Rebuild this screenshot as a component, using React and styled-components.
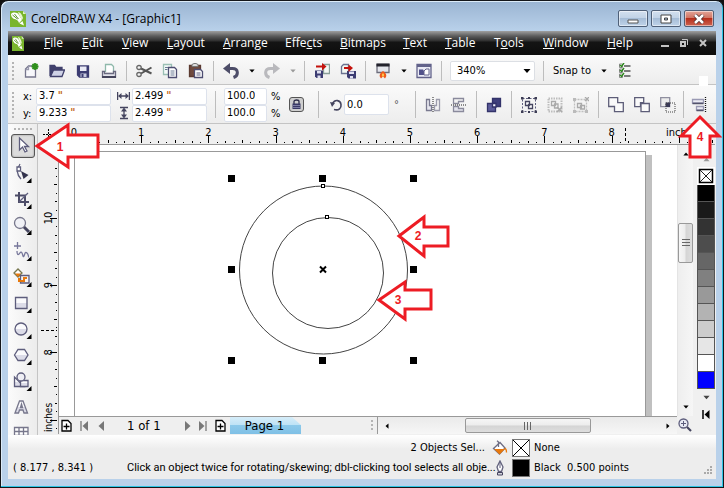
import React from 'react'
import styled, { createGlobalStyle, css } from 'styled-components'

const uiFont = '"DejaVu Sans Condensed", "DejaVu Sans", sans-serif'
const menuFont = '"Open Sans", "Noto Sans", sans-serif'
const narrowFont = 'Roboto, "Noto Sans", sans-serif'

const INCH = 67.2

const GlobalStyle = createGlobalStyle`
  * { box-sizing: border-box; }
  body { margin: 0; background: #111; }
  button, input, select { font: inherit; color: inherit; margin: 0; }
  svg { display: block; }
`

const Window = styled.div`
  position: relative;
  display: flex;
  flex-direction: column;
  height: 100vh;
  min-height: 320px;
  padding: 0 7px 8px;
  overflow: hidden;
  border: 1px solid #14161a;
  border-radius: 8px 8px 0 0;
  background: linear-gradient(#9ab4d2, #b9d1ea 30px);
  box-shadow: inset -1px -1px 0 #2cc4e4, inset 1px 1px 0 #dcebf8;
  font: 11px/14px ${uiFont};
  color: #000;
`

const TitleBar = styled.header`
  display: flex;
  align-items: center;
  height: 30px;
  flex: none;
  padding: 5px 0 0 2px;
  gap: 5px;
`

const Title = styled.h1`
  flex: 1;
  margin: 0;
  font: 12px/18px ${menuFont};
`

const WindowButtons = styled.div`
  display: flex;
  gap: 3px;
  align-self: flex-start;
  padding: 4px 2px 0 0;
`

const WindowButton = styled.button`
  display: grid;
  place-items: center;
  width: 30px;
  height: 17px;
  padding: 0;
  border: 1px solid #4f6078;
  border-radius: 2px;
  box-shadow: inset 0 0 0 1px rgba(255, 255, 255, 0.5);
  background: ${p =>
    p.$close
      ? 'linear-gradient(#e3a598, #cf7261 48%, #b62f1c 50%, #cd6350)'
      : 'linear-gradient(#d3e0ef, #c0d2e6 48%, #a6bdd7 50%, #bfd3e9)'};
`

const MenuBar = styled.nav`
  display: flex;
  align-items: center;
  flex: none;
  height: 24px;
  padding: 0 9px 0 4px;
  background: linear-gradient(#a0a0a0, #5c5c5c 5px, #2e2e2e 10px, #141414 11px, #0c0c0c);
  color: #fff;
  font: 12px/18px ${menuFont};
`

const MenuLinks = styled.div`
  display: flex;
  flex: 1;
  padding-left: 10px;
`

const MenuButton = styled.button`
  width: ${p => p.$width}px;
  padding: 0 0 0 10px;
  border: 0;
  background: none;
  text-align: left;
  white-space: nowrap;
`

const DocButtons = styled.div`
  display: flex;
  gap: 11px;
`

const PlainButton = styled.button`
  display: grid;
  place-items: center;
  padding: 0;
  border: 0;
  background: none;
`

const bar = css`
  display: flex;
  align-items: center;
  flex: none;
  padding-left: 4px;
  background: linear-gradient(#fafafa, #ededed);
`

const Toolbar = styled.div`
  ${bar}
  height: 30px;
  padding-top: 2px;
  border-bottom: 1px solid #c4c4c4;
`

const PropertyBar = styled.div`
  ${bar}
  height: 39px;
  padding-top: 1px;
  border-bottom: 1px solid #c4c4c4;
`

const Grip = styled.span`
  flex: none;
  width: ${p => (p.$horizontal ? 18 : 2)}px;
  height: ${p => (p.$horizontal ? 2 : p.$size || 18)}px;
  margin: ${p => (p.$horizontal ? '0' : '0 4px 0 0')};
  background: ${p =>
    p.$horizontal
      ? 'repeating-linear-gradient(90deg, #b4b4b4 0 2px, transparent 2px 4px)'
      : 'repeating-linear-gradient(#b4b4b4 0 2px, transparent 2px 4px)'};
`

const Separator = styled.span`
  flex: none;
  width: 1px;
  height: ${p => (p.$tall ? 27 : 20)}px;
  margin: 0 ${p => (p.$gap === undefined ? 4 : p.$gap)}px;
  background: #bdbdbd;
`

const IconButton = styled(PlainButton)`
  flex: none;
  width: ${p => p.$width || 26}px;
  height: 24px;
`

const LockBox = styled.span`
  display: grid;
  place-items: center;
  width: 15px;
  height: 15px;
  border: 1px solid #555;
  border-radius: 3px;
  background: #cfcfcf;
`

const ZoomSelect = styled.select`
  appearance: none;
  width: 85px;
  height: 20px;
  margin-left: 4px;
  padding: 0 6px;
  border: 1px solid #dcdfe4;
  border-radius: 2px;
  background: #fff;
`

const SelectWrap = styled.span`
  display: grid;
  align-items: center;
  > * { grid-area: 1 / 1; }
  > svg { justify-self: end; margin-right: 4px; pointer-events: none; }
`

const SnapButton = styled(PlainButton)`
  padding-left: 1px;
`

const Fields = styled.div`
  display: grid;
  grid-template-columns: ${p => p.$columns};
  grid-auto-rows: 17px;
  align-items: center;
`

const Label = styled.label`
  padding-left: ${p => p.$indent || 0}px;
  line-height: 17px;
`

const FieldBox = styled.span`
  display: flex;
  align-items: center;
  width: ${p => p.$width}px;
  height: ${p => (p.$tall ? 21 : 17)}px;
  padding-left: 2px;
  border: 1px solid #dde2ec;
  border-radius: 2px;
  background: #fff;
`

const Value = styled.input`
  field-sizing: content;
  min-width: 0;
  max-width: 40px;
  height: 14px;
  padding: 0;
  border: 0;
  background: none;
  outline: none;
`

const Unit = styled.span`
  padding-left: 3px;
  color: #c46a1c;
  font-weight: bold;
`

const Degree = styled.span`
  width: 22px;
  padding-left: 5px;
  color: #555;
`

const Workspace = styled.main`
  display: flex;
  flex: 1;
  min-height: 0;
  background: #f0f0f0;
`

const Toolbox = styled.div`
  display: flex;
  flex-direction: column;
  align-items: center;
  flex: none;
  width: 30px;
  padding-top: 4px;
  overflow: hidden;
  border-right: 1px solid #c4c4c4;
  background: linear-gradient(90deg, #fbfbfb, #ececec);
`

const ToolButton = styled(PlainButton)`
  flex: none;
  width: 24px;
  height: 24px;
  margin-top: 2px;
  ${p =>
    p.$active &&
    css`
      margin: 4px 0 2px;
      border: 1px solid #555;
      border-radius: 3px;
      background: #dcdcdc;
      box-shadow: inset 0 0 2px #888;
    `}
`

const Desk = styled.div`
  display: grid;
  grid-template-columns: 21px minmax(0, 1fr) 16px;
  grid-template-rows: 21px minmax(0, 1fr) 18px;
  flex: 1;
  min-width: 0;
  margin-bottom: 1px;
`

// runs on above the palette, up to the window edge
const RulerTop = styled.div`
  grid-column: 1 / 4;
  min-width: 0;
  margin-right: -22px;
  overflow: hidden;
  border-bottom: 1px solid #999;
  background: #efefef;
`

const RulerLeft = styled.div`
  grid-row: 2 / 4;
  overflow: hidden;
  border-right: 1px solid #999;
  background: #efefef;
`

const Canvas = styled.div`
  display: flex;
  overflow: hidden;
  padding: 6px 31px 0 15px;
  background: #fff;
`

const Page = styled.div`
  flex: 1;
  min-width: 0;
  border: 1px solid #999;
  border-bottom: 0;
  background: #fff;
  box-shadow: 6px 4px 0 #c0c0c0;
`

const ScrollColumn = styled.div`
  display: flex;
  flex-direction: column;
  align-items: center;
  padding: 6px 0;
  border-left: 1px solid #e4e4e4;
  background: linear-gradient(90deg, #eee, #f6f6f6);
`

const Thumb = styled.span`
  display: grid;
  place-items: center;
  flex: none;
  width: ${p => (p.$vertical ? 15 : 126)}px;
  height: ${p => (p.$vertical ? 40 : 15)}px;
  border: 1px solid #999;
  border-radius: 2px;
  background: ${p =>
    p.$vertical
      ? 'linear-gradient(90deg, #f6f6f6, #ececec 48%, #d4d4d4 52%, #dedede)'
      : 'linear-gradient(#f6f6f6, #ececec 48%, #d4d4d4 52%, #dedede)'};
`

const Space = styled.span`
  flex: ${p => p.$grow};
`

const PageBar = styled.div`
  display: flex;
  min-width: 0;
  border-top: 1px solid #999;
`

const PageNav = styled.div`
  display: flex;
  align-items: center;
  flex: none;
  width: 319px;
  padding-left: 2px;
  border-right: 1px solid #999;
  background: #efefef;
`

const NavButton = styled(PlainButton)`
  width: ${p => p.$width}px;
  height: 17px;
  justify-items: start;
`

const PageCount = styled.span`
  width: 57px;
  font-size: 13px;
`

const PageTab = styled.button`
  width: 71px;
  height: 17px;
  margin-right: auto;
  padding: 0 2px 0 0;
  border: 0;
  background: linear-gradient(#d6edf9, #bfe3f6 45%, #8cc9ea 50%, #7fc0e6);
  clip-path: polygon(0 0, 62px 0, 100% 8px, 100% 100%, 0 100%);
  font-size: 13px;
  line-height: 16px;
`

const ScrollRow = styled.div`
  display: flex;
  align-items: center;
  flex: 1;
  min-width: 0;
  padding: 0 6px;
  background: linear-gradient(#eaeaea, #f6f6f6);
`

const Palette = styled.div`
  display: flex;
  flex-direction: column;
  align-items: center;
  flex: none;
  width: 23px;
  padding: 32px 1px 0 4px;
`

const NoColor = styled(PlainButton)`
  width: 18px;
  height: 18px;
  margin-top: 4px;
  background: #fff;
`

const Swatch = styled.button`
  flex: none;
  width: 18px;
  height: 17px;
  padding: 0;
  border: 1px solid #555;
  border-top: 0;
  background: ${p => p.$color};
`

const PaletteArrow = styled(PlainButton)`
  height: 17px;
  flex: none;
`

const StatusBar = styled.footer`
  display: grid;
  grid-template-columns: 114px minmax(0, 1fr) 20px 22px auto;
  grid-auto-rows: 20px;
  align-items: center;
  flex: none;
  height: 44px;
  padding: 3px 3px 0 5px;
  background: linear-gradient(#fff, #ededed 14px);
`

const Selection = styled.span`
  grid-column: 1 / 3;
  padding-right: 7px;
  text-align: right;
`

const Hint = styled.span`
  white-space: nowrap;
  font: 11px/14px ${narrowFont};
`

const Paint = styled.span`
  width: 18px;
  height: 18px;
  border: 1px solid #777;
  background: ${p => p.$color};
`

const Corner = styled.span`
  display: flex;
  align-items: flex-end;
  justify-content: space-between;
  width: 179px;
`

// pale spot where the toolbar fades out above callout 4
const Spot = styled.span`
  position: absolute;
  top: 75px;
  right: 15px;
  width: 9px;
  height: 10px;
  background: #fff;
`

const CalloutLayer = styled.svg`
  position: absolute;
  top: ${p => p.$top}px;
  ${p => (p.$right === undefined ? `left: ${p.$left}px;` : `right: ${p.$right}px;`)}
  pointer-events: none;
  fill: #fff;
  stroke: #ed1c24;
  stroke-width: 3;
  text {
    font: bold 12px "Liberation Sans", sans-serif;
    fill: #ed1c24;
    stroke: none;
  }
`

const Icon = ({ size = 16, w, h, children }) => (
  <svg
    width={w || size}
    height={h || size}
    viewBox={`0 0 ${w || size} ${h || size}`}
    fill='none'
    stroke='#5d5d7c'
    strokeWidth='1.3'
    aria-hidden='true'
  >
    {children}
  </svg>
)

const Caret = ({ dir = 'down', color = '#000', size = 8 }) => {
  const turn = { down: 0, left: 90, up: 180, right: 270 }[dir]
  return (
    <svg width={size} height={size} viewBox='0 0 8 8' aria-hidden='true'>
      <path d='M0.5 2h7L4 6z' fill={color} transform={`rotate(${turn} 4 4)`} />
    </svg>
  )
}

const CorelMark = ({ width, height }) => (
  <svg width={width} height={height} viewBox='0 0 16 16' preserveAspectRatio='none' aria-hidden='true'>
    <path d='M0 0h13l3 3v13H0z' fill='#79b52c' />
    <path d='M1 3C3 1 7 1 9 4l3 5-3 3C8 9 6 8 4 8 2 7 1 5 1 3z' fill='#fff' />
    <path d='M8 1c2 0 4 2 5 6l-1 2C10 6 9 4 8 1z' fill='#e6f4d0' />
    <path d='M2.5 4l5 4M4.5 3l4 5' stroke='#4b8a16' strokeWidth='0.9' />
    <path d='M9.5 12.5L12.500 10l1.500 4.500z' fill='#fff' />
    <path d='M13 0v3h3z' fill='#dff0c4' />
  </svg>
)

const icons = {
  new: (
    <Icon>
      <path d='M2.5 14V6l3-3h7v11z' fill='#f7f7fb' stroke='#75758c' />
      <path d='M2.5 6.5h3V3' stroke='#9a9aae' />
      <path d='M12 0v7M8.5 3.5h7M9.5 1l5 5M14.5 1l-5 5' stroke='#2f8f1c' strokeWidth='1.8' />
    </Icon>
  ),
  open: (
    <Icon>
      <path d='M1 13V2.5h4.5l1.5 2h6V7' fill='#40406c' stroke='#40406c' />
      <path d='M1.5 13.5L4.5 7h11l-2.5 6.5z' fill='#cfd2e6' stroke='#40406c' />
    </Icon>
  ),
  save: (
    <Icon>
      <path d='M2.5 3h11v11h-9l-2-2z' fill='#3c3c72' stroke='#3c3c72' />
      <path d='M5 3.5h6.500V8H5z' fill='#e9eaf5' stroke='none' />
      <path d='M5.500 10.5h6V14h-6z' fill='#c9cbe0' stroke='none' />
      <path d='M6.5 11h2v3h-2z' fill='#3c3c72' stroke='none' />
    </Icon>
  ),
  print: (
    <Icon>
      <path d='M4.5 9V1.5h6l2 2V9' fill='#fff' stroke='#8fb9ab' />
      <path d='M1.5 8.5h2v2h9v-2h2V14h-13z' fill='#e4e4ec' stroke='#6a6a80' />
      <path d='M1 14h14' strokeWidth='2' stroke='#45455c' />
    </Icon>
  ),
  cut: (
    <Icon>
      <path d='M5 5.5l10.5 5M5 10.5l10.5-6' stroke='#555' strokeWidth='2' />
      <ellipse cx='3' cy='4.5' rx='2.2' ry='2' stroke='#666' />
      <ellipse cx='3' cy='11.5' rx='2.2' ry='2' stroke='#666' />
    </Icon>
  ),
  copy: (
    <Icon>
      <path d='M1.5 1.5h8v10h-8z' fill='#f4faf8' stroke='#9abfb4' />
      <path d='M6.5 4.5h6l2 2v8h-8z' fill='#fff' stroke='#4e4e72' />
      <path d='M3 4.5h3M3 6.5h2.5M8.5 8h4M8.5 10h4M8.5 12h4' strokeWidth='1' stroke='#6b7b94' />
    </Icon>
  ),
  paste: (
    <Icon>
      <path d='M1.5 2.5h11v11h-11z' fill='#6f4a3e' stroke='#5b3a30' />
      <path d='M4 3.5V1.5l2-1h2l2 1v2z' fill='#ddd' stroke='#777' strokeWidth='1' />
      <path d='M6.5 6.5h6l2 2v6h-8z' fill='#fff' stroke='#4e4e72' />
      <path d='M8.5 10h4M8.5 12h4' strokeWidth='1' />
    </Icon>
  ),
  undo: (
    <Icon>
      <path d='M5 5.5h4.5c6 0 6.5 7 1 9' stroke='#4d4d68' strokeWidth='3' />
      <path d='M0 5.5L7 0v11z' fill='#4d4d68' stroke='none' />
    </Icon>
  ),
  redo: (
    <Icon>
      <path d='M11 5.5H6.5c-6 0-6.5 7-1 9' stroke='#b9b9bd' strokeWidth='3' />
      <path d='M16 5.5L9 0v11z' fill='#b9b9bd' stroke='none' />
    </Icon>
  ),
  importFile: (
    <Icon>
      <path d='M9.5 1.5h6v9h-6z' fill='#f4f9f4' stroke='#8ba09a' />
      <path d='M1 7.5h8V15H2.5L1 13.5z' fill='#3c3c72' stroke='none' />
      <path d='M3 8h4v2.5H3zM3.5 12.5h3V15h-3z' fill='#dfe0f0' stroke='none' />
      <path d='M2 3.5h7' stroke='#c4120c' strokeWidth='2.2' />
      <path d='M8 0l4.5 3.5L8 7.5z' fill='#c4120c' stroke='none' />
    </Icon>
  ),
  exportFile: (
    <Icon>
      <path d='M1.5 10.5v-7l2-2h5v9z' fill='#f4f9f4' stroke='#6b7390' />
      <path d='M7 8h9v7.5H8.5L7 14z' fill='#3c3c72' stroke='none' />
      <path d='M9 8.5h5V11H9zM10 13h3v2.5h-3z' fill='#dfe0f0' stroke='none' />
      <path d='M4 5h6' stroke='#c4120c' strokeWidth='2.2' />
      <path d='M8.5 1.5L13 5 8.5 9z' fill='#c4120c' stroke='none' />
    </Icon>
  ),
  launcher: (
    <Icon>
      <path d='M2 1.5h12v8H2z' fill='#e4e6ec' stroke='#6d6d7c' />
      <path d='M1.5 2h13' stroke='#22222c' strokeWidth='3' />
      <path d='M8 8c4 3 4 5 2 7.5l-2-2-2 2C4 13 4 11 8 8z' fill='#ef5a1a' stroke='none' />
      <path d='M8 10c2 2 1 3 0 4-1-1-2-2 0-4z' fill='#ffc14a' stroke='none' />
    </Icon>
  ),
  welcome: (
    <Icon>
      <path d='M1 1.5h14v13H1z' fill='#e9eaf4' stroke='#62628a' />
      <path d='M1 2.5h14' stroke='#62628a' strokeWidth='3' />
      <path d='M3 6.500h4l1 1.500v4H3z' fill='#51518a' stroke='none' />
      <path d='M8 12V8l2-2h3v6z' fill='#fff' stroke='#62628a' strokeWidth='1' />
    </Icon>
  ),
  options: (
    <Icon>
      {[3, 8, 13].map(y => (
        <g key={y}>
          <path d={`M2.5 ${y - 2}h3v3.5h-3z`} fill='#fff' stroke='#888' strokeWidth='1' />
          <path d={`M3 ${y - 1}l1.500 1.5L7 ${y - 3}`} stroke='#2c8a1c' strokeWidth='1.4' />
          <path d={`M7 ${y}h6.5`} stroke='#555' />
        </g>
      ))}
    </Icon>
  ),
  width: (
    <Icon w={13} h={12}>
      <path d='M0.6 2v8M12.4 2v8M2 6h9' stroke='#45455f' />
      <path d='M1 6l3.5-3v6zM12 6L8.5 3v6z' fill='#45455f' stroke='none' />
    </Icon>
  ),
  height: (
    <Icon w={13} h={14}>
      <path d='M3 1.5h8M3 12.5h8M7 3v8' stroke='#45455f' />
      <path d='M7 1.5L4 5.5h6zM7 12.5L4 8.5h6z' fill='#45455f' stroke='none' />
    </Icon>
  ),
  lock: (
    <Icon size={11}>
      <path d='M3 5V2.5C3 .5 8 .5 8 2.5V5' stroke='#2c2c48' />
      <path d='M1.5 4.5h8V10h-8z' fill='#3a3a66' stroke='none' />
      <path d='M2 6.5h7M2 8.5h7' stroke='#8e8eb4' strokeWidth='0.8' />
    </Icon>
  ),
  rotate: (
    <Icon size={14}>
      <path d='M5 11.5c5 1.5 7.5-1.5 7-5C11.5 2 6 1 3.5 5.5' stroke='#45455f' strokeWidth='1.6' />
      <path d='M1 4l5 1-3 4z' fill='#45455f' stroke='none' />
    </Icon>
  ),
  mirrorH: (
    <Icon>
      <path d='M1.5 2.500h3v6h2v5h-5z' fill='#e8e8f0' stroke='#7a7a90' />
      <path d='M14.5 2.500h-3v6h-2v5h5z' fill='#f4f4f4' stroke='#9c9cac' />
      <path d='M8 0v16' stroke='#222' strokeWidth='1' strokeDasharray='1 1' />
    </Icon>
  ),
  mirrorV: (
    <Icon>
      <path d='M12.5 1.5v3h-5v2h-5v-5z' fill='#f4f4f4' stroke='#8a8a9c' />
      <path d='M12.5 14.5v-3h-5v-2h-5v5z' fill='#e4e4ee' stroke='#8a8a9c' />
      <path d='M0 8h16' stroke='#222' strokeWidth='1' strokeDasharray='1 1' />
    </Icon>
  ),
  order: (
    <Icon>
      <path d='M6.5 1.5h8v8h-8z' fill='#3f3f7c' stroke='#33336a' />
      <path d='M1.5 6.5h8v8h-8z' fill='#5c5c9a' stroke='#33336a' />
      <path d='M6.500 6.5h3.5V10H6.500z' fill='#f0f0fa' stroke='#33336a' />
    </Icon>
  ),
  group: (
    <Icon>
      <path d='M1.5 1.5h13v13h-13z' strokeDasharray='2 1.5' strokeWidth='1' />
      <path d='M4.5 4.5h4v4h-4zM7.5 7.5h4v4h-4z' fill='#fff' stroke='#45455f' />
      <path d='M0 0h2.500v2.500H0zM13.500 0H16v2.500h-2.500zM0 13.500h2.500V16H0zM13.500 13.500H16V16h-2.500zM7 0h2v2H7zM7 14h2v2H7z' fill='#3d3d55' stroke='none' />
    </Icon>
  ),
  ungroup: (
    <Icon>
      <path d='M1.5 1.5h13v13h-13z' stroke='#bdbdbd' strokeWidth='2' strokeDasharray='1.5 1' />
      <path d='M4.5 4.5h4v4h-4zM7.5 7H11v4H7.5z' fill='#f4f4f4' stroke='#aaa' />
      <path d='M10 10l5 5M15 10l-5 5' stroke='#aaa' strokeWidth='1.6' />
    </Icon>
  ),
  ungroupAll: (
    <Icon>
      <path d='M1.5 2.5h12v12h-12z' stroke='#c0c0c0' strokeDasharray='2 1' />
      <path d='M4.5 6.5h4v4h-4zM7.5 8.5h4V12h-4z' fill='#f4f4f4' stroke='#aaa' />
      <path d='M0 1h3v3H0zM0 13h3v3H0zM12 13h3v3h-3z' fill='#bbb' stroke='none' />
      <path d='M12 0l4 4M16 0l-4 4' stroke='#aaa' />
    </Icon>
  ),
  weld: (
    <Icon>
      <path d='M.7 .7h9v5h5.6v9H6.5V9.5H.7z' fill='#fafafa' stroke='#5d5d78' />
    </Icon>
  ),
  trim: (
    <Icon>
      <path d='M.7 .7h9v5H6.5v4H.7z' fill='#fafafa' stroke='#5d5d78' />
      <path d='M7 6.5h8.3v8.2H7z' fill='#fafafa' stroke='#5d5d78' />
    </Icon>
  ),
  intersect: (
    <Icon>
      <path d='M.7 .7h9v9h-9z' fill='#ededed' stroke='#9090a0' />
      <path d='M5.500 5.500H10V10H5.500z' fill='#3a3a58' stroke='none' />
      <path d='M6 6h9v9H6z' strokeDasharray='1 1' strokeWidth='1' stroke='#444' />
    </Icon>
  ),
  align: (
    <Icon>
      <path d='M1.5 2.5h11V6h-11zM5.5 9.5h7V13h-7z' fill='#ececf4' stroke='#9a9ab4' />
      <path d='M1.5 6.5h11M5.5 13.5h7' stroke='#53536c' />
      <path d='M14.5 0v16' strokeDasharray='1 1' stroke='#111' />
    </Icon>
  ),
  noColor: (
    <Icon>
      <path d='M1.5 1.5h13v13h-13z' fill='#fff' stroke='#000' strokeWidth='1.5' />
      <path d='M2 2l12 12M14 2L2 14' stroke='#222' strokeWidth='1' />
    </Icon>
  ),
  zoomPage: (
    <Icon w={14} h={14}>
      <circle cx='5.5' cy='5.5' r='4.5' fill='#e8eaf4' />
      <path d='M3 5.5h5M5.5 3v5' strokeWidth='1' />
      <path d='M9 9l4 4' strokeWidth='2.2' stroke='#45455f' />
    </Icon>
  ),
  bucket: (
    <Icon>
      <path d='M1.5 8.5L8 2.5l5 5.5-5.5 6z' fill='#fff' stroke='#6d6d84' />
      <path d='M2 9h11l-5.5 5.5z' fill='#e8780c' stroke='none' />
      <path d='M6.5 7V2L5 .7' stroke='#6d6d84' />
      <path d='M12.500 8.5c2 0 2 2 2 4' stroke='#e8780c' />
    </Icon>
  ),
  pen: (
    <Icon>
      <path d='M8 1l3 6-1.5 4.5h-3L5 7z' fill='#fff' stroke='#62627c' />
      <path d='M8 2v6' strokeWidth='1' />
      <path d='M5.5 12.5h5V15h-5z' fill='#d5d5de' stroke='#45455f' strokeWidth='1' />
    </Icon>
  ),
  newPage: (
    <Icon w={11} h={13}>
      <path d='M1 1.5h6l3 3V12H1z' fill='#fff' stroke='#000' />
      <path d='M5.5 4.5v6M2.5 7.5h6' stroke='#000' />
    </Icon>
  )
}

// flyout marks the tools that open a sub menu
const tools = [
  { name: 'Pick', flyout: false, art: <path d='M7.5 3v12l3-3 2.5 5 2-1-2.500-4.5h4z' fill='#fff' /> },
  {
    name: 'Shape',
    flyout: true,
    art: (
      <>
        <path d='M8 1c-4 6-3 11 1 15' />
        <path d='M5 4h3.500v4H5z' fill='#fff' />
        <path d='M9 8l7.500 4-5 4z' fill='#33334d' stroke='none' />
      </>
    )
  },
  {
    name: 'Crop',
    flyout: true,
    art: (
      <>
        <path d='M3 6.500h10v10.500M7 3v10h10' stroke='#4d4d68' strokeWidth='2' />
        <path d='M7 13L16 4' />
      </>
    )
  },
  {
    name: 'Zoom',
    flyout: true,
    art: (
      <>
        <circle cx='8' cy='8' r='5.5' fill='#f0f1f6' stroke='#77778c' />
        <path d='M12 12l5 5' stroke='#45455f' strokeWidth='3' />
      </>
    )
  },
  {
    name: 'Freehand',
    flyout: true,
    art: <path d='M2 5h7M5.5 1v7M5 10c0 4 1 4 2 3s2-3 3-1 1 5 2 3 1-5 3-3 1 4 2 4' stroke='#77779a' />
  },
  {
    name: 'Smart fill',
    flyout: true,
    art: (
      <>
        <path d='M2 6l4-4 4 4-4 4z' fill='#fff' stroke='#77774f' />
        <path d='M3 6.5h6L6 10z' fill='#e8780c' stroke='none' />
        <path d='M8.500 8.500H17V16H8.500z' fill='#f8f4f0' />
        <path d='M7 11v3h5v-3h3' stroke='#e8780c' strokeWidth='2' />
      </>
    )
  },
  { name: 'Rectangle', flyout: true, art: <path d='M3.5 4.5H15v11H3.5z' fill='url(#tool)' /> },
  { name: 'Ellipse', flyout: true, art: <circle cx='9' cy='10' r='6' fill='url(#tool)' /> },
  { name: 'Polygon', flyout: true, art: <path d='M2.5 10L6 4.5h6.5L16 10l-3.5 5.5H6z' fill='url(#tool)' /> },
  {
    name: 'Basic shapes',
    flyout: true,
    art: (
      <>
        <path d='M2.5 6v9.5H12z' fill='url(#tool)' />
        <path d='M8.5 9.5H16v6H8.5z' fill='url(#tool)' />
        <circle cx='9' cy='6' r='4' fill='#eeeef4' />
      </>
    )
  },
  {
    name: 'Text',
    flyout: false,
    art: <path d='M3 16L7.5 4H11l4.500 12H12l-1-3H7.5l-1 3zM8.5 10.5h2L9.5 7z' fill='url(#tool)' stroke='#77778c' />
  },
  {
    name: 'Table',
    flyout: false,
    art: <path d='M2.5 4.5H16v12H2.5zM7 4.5v12M11.5 4.5v12M2.5 8.5H16M2.5 12.5H16' fill='#fff' stroke='#77778c' />
  }
]

// label, shortcut position, width
const menus = [
  ['File', 0, 38],
  ['Edit', 0, 40],
  ['View', 0, 45],
  ['Layout', 0, 56],
  ['Arrange', 0, 62],
  ['Effects', 4, 55],
  ['Bitmaps', 0, 63],
  ['Text', 0, 42],
  ['Table', 0, 49],
  ['Tools', 1, 49],
  ['Window', 0, 64],
  ['Help', 0, 40]
]

const swatches = [
  '#000000',
  '#1a1a1a',
  '#333333',
  '#4d4d4d',
  '#666666',
  '#808080',
  '#999999',
  '#b3b3b3',
  '#cccccc',
  '#e6e6e6',
  '#ffffff',
  '#0000ff'
]

const tickLength = i => {
  if (i % 8 === 0) return 7
  if (i % 4 === 0) return 3
  if (i % 2 === 0) return 2
  return 1
}

const range = (from, to) => Array.from({ length: to - from }, (_, i) => from + i)

const Ruler = ({ vertical }) => {
  if (vertical) {
    // page height runs upwards, so numbers fall as y grows
    return (
      <svg width='20' height='100%' fontSize='11' fontFamily={uiFont} shapeRendering='crispEdges'>
        {range(-8, 56).map(i => {
          const y = Math.round(73 + (i * INCH) / 8)
          const len = tickLength(i)
          return <rect key={i} x={19 - len} y={y} width={len} height='1' />
        })}
        {range(0, 3).map(n => (
          <text key={n} transform={`translate(14 ${73 + n * INCH}) rotate(-90)`} textAnchor='middle'>
            {10 - n}
          </text>
        ))}
        <text transform='translate(14 287) rotate(-90)' fontSize='10'>
          inches
        </text>
        <path d='M3 185.5h16' stroke='#000' strokeDasharray='3 2' />
      </svg>
    )
  }
  return (
    <svg width='100%' height='20' fontSize='11' fontFamily={uiFont} shapeRendering='crispEdges'>
      <path d='M10.5 5v11M5 10.5h11' stroke='#000' strokeDasharray='2 1' />
      {range(-1, 96).map(i => {
        const x = Math.round(36 + (i * INCH) / 8)
        const len = tickLength(i)
        return <rect key={i} x={x} y={19 - len} width='1' height={len} />
      })}
      {range(0, 9).map(n => (
        <text key={n} x={36 + n * INCH} y='12' textAnchor='middle'>
          {n}
        </text>
      ))}
      <text x='628' y='12'>
        inches
      </text>
      <path d='M587.5 4v15' stroke='#000' strokeDasharray='3 2' />
    </svg>
  )
}

const Drawing = () => (
  <svg width='400' height='240' fill='none' stroke='#444' aria-label='Two circles'>
    <circle cx='248.5' cy='118' r='84' />
    <circle cx='253' cy='121' r='55.5' />
    <g fill='#000' stroke='none' shapeRendering='crispEdges'>
      {[153, 244, 335].map(x =>
        [23, 114, 205].map(y => (x === 244 && y === 114 ? null : <rect key={`${x}-${y}`} x={x} y={y} width='7' height='7' />))
      )}
    </g>
    <g fill='#fff' stroke='#000' shapeRendering='crispEdges'>
      <rect x='246.5' y='32.5' width='3' height='3' />
      <rect x='250.5' y='63.5' width='3' height='3' />
    </g>
    <path d='M245 114.5l6 6M251 114.5l-6 6' stroke='#000' strokeWidth='2' />
  </svg>
)

const Callout = ({ label, points, width, height, textX, textY, ...place }) => (
  <CalloutLayer width={width} height={height} {...place}>
    <polygon points={points} />
    <text x={textX} y={textY} textAnchor='middle'>
      {label}
    </text>
  </CalloutLayer>
)

const Field = ({ id, value, unit, width, tall, label }) => (
  <FieldBox $width={width} $tall={tall}>
    <Value id={id} defaultValue={value} aria-label={label} />
    {unit && <Unit>{unit}</Unit>}
  </FieldBox>
)

const Tool = ({ name, width, icon, ...rest }) => (
  <IconButton type='button' aria-label={name} $width={width} {...rest}>
    {icon || icons[name]}
  </IconButton>
)

const StandardBar = () => (
  <Toolbar>
    <Grip />
    {['new', 'open', 'save', 'print'].map(n => <Tool key={n} name={n} />)}
    <Separator />
    {['cut', 'copy', 'paste'].map(n => <Tool key={n} name={n} />)}
    <Separator />
    <Tool name='undo' />
    <Tool name='undo list' width={15} icon={<Caret size={6} />} />
    <Tool name='redo' />
    <Tool name='redo list' width={15} icon={<Caret size={6} color='#999' />} />
    <Separator />
    <Tool name='importFile' />
    <Tool name='exportFile' />
    <Separator />
    <Tool name='launcher' />
    <Tool name='launcher list' width={15} icon={<Caret size={6} />} />
    <Tool name='welcome' />
    <Separator />
    <SelectWrap>
      <ZoomSelect aria-label='Zoom level' defaultValue='340%'>
        <option>340%</option>
        <option>100%</option>
      </ZoomSelect>
      <Caret />
    </SelectWrap>
    <Separator $gap={8} />
    <SnapButton type='button'>Snap to</SnapButton>
    <Tool name='snap list' icon={<Caret size={6} />} />
    <Tool name='options' width={16} />
  </Toolbar>
)

const PropertyPanel = () => (
  <PropertyBar>
    <Grip $size={26} />
    <Fields $columns='18px 81px 15px 75px'>
      <Label htmlFor='pos-x' $indent={5}>x:</Label>
      <Field id='pos-x' value='3.7' unit='"' width={75} />
      {icons.width}
      <Field value='2.499' unit='"' width={75} label='Width' />
      <Label htmlFor='pos-y' $indent={5}>y:</Label>
      <Field id='pos-y' value='9.233' unit='"' width={75} />
      {icons.height}
      <Field value='2.499' unit='"' width={75} label='Height' />
    </Fields>
    <Separator $tall $gap={8} />
    <Fields $columns='47px 12px'>
      <Field id='scale-x' value='100.0' width={43} />
      <Label htmlFor='scale-x'>%</Label>
      <Field id='scale-y' value='100.0' width={43} />
      <Label htmlFor='scale-y'>%</Label>
    </Fields>
    <Tool name='lock ratio' icon={<LockBox>{icons.lock}</LockBox>} />
    <Separator $tall $gap={9} />
    <IconButton as='span' $width={16}>
      {icons.rotate}
    </IconButton>
    <Field value='0.0' width={45} tall label='Angle' />
    <Degree>°</Degree>
    <Separator $tall />
    <Tool name='mirrorH' />
    <Tool name='mirrorV' />
    <Separator $tall />
    <Tool name='order' />
    <Separator $tall />
    {['group', 'ungroup', 'ungroupAll'].map(n => <Tool key={n} name={n} />)}
    <Separator $tall />
    {['weld', 'trim', 'intersect'].map(n => <Tool key={n} name={n} />)}
    <Separator $tall $gap={2} />
    <Tool name='align' />
  </PropertyBar>
)

const ToolPanel = () => (
  <Toolbox>
    <Grip $horizontal />
    <svg width='0' height='0'>
      <linearGradient id='tool' x2='0' y2='1'>
        <stop offset='0.5' stopColor='#fafafc' />
        <stop offset='0.5' stopColor='#dcdce8' />
      </linearGradient>
    </svg>
    {tools.map((tool, i) => (
      <ToolButton key={tool.name} type='button' aria-label={tool.name} $active={i === 0}>
        <Icon size={22}>
          {tool.art}
          {tool.flyout && <path d='M19.5 15v5h-5z' fill='#000' stroke='none' />}
        </Icon>
      </ToolButton>
    ))}
  </Toolbox>
)

const Pages = () => (
  <PageBar>
    <PageNav>
      <NavButton type='button' $width={19} aria-label='Add page before'>
        {icons.newPage}
      </NavButton>
      <NavButton type='button' $width={18} aria-label='First page'>
        <Icon w={8} h={10}>
          <path d='M1 0v10' stroke='#777' />
          <path d='M8 0v10L2.5 5z' fill='#777' stroke='none' />
        </Icon>
      </NavButton>
      <NavButton type='button' $width={29} aria-label='Previous page'>
        <Icon w={8} h={10}>
          <path d='M6 0v10L.5 5z' fill='#777' stroke='none' />
        </Icon>
      </NavButton>
      <PageCount>1 of 1</PageCount>
      <NavButton type='button' $width={15} aria-label='Next page'>
        <Icon w={8} h={10}>
          <path d='M1 0v10L6.5 5z' fill='#777' stroke='none' />
        </Icon>
      </NavButton>
      <NavButton type='button' $width={16} aria-label='Last page'>
        <Icon w={8} h={10}>
          <path d='M7 0v10' stroke='#777' />
          <path d='M0 0v10L5.5 5z' fill='#777' stroke='none' />
        </Icon>
      </NavButton>
      <NavButton type='button' $width={15} aria-label='Add page after'>
        {icons.newPage}
      </NavButton>
      <PageTab type='button'>Page 1</PageTab>
      <Grip $size={12} />
    </PageNav>
    <ScrollRow>
      <Caret dir='left' size={6} />
      <Space $grow={75} />
      <Thumb>
        <Icon w={9} h={8}>
          <path d='M1.5 0v8M4.5 0v8M7.5 0v8' stroke='#666' strokeWidth='1' />
        </Icon>
      </Thumb>
      <Space $grow={75} />
      <Caret dir='right' size={6} />
    </ScrollRow>
  </PageBar>
)

const Colors = () => (
  <Palette>
    <Caret dir='up' color='#999' size={7} />
    <NoColor type='button' aria-label='No colour'>
      {icons.noColor}
    </NoColor>
    {swatches.map(color => (
      <Swatch key={color} type='button' $color={color} aria-label={color} />
    ))}
    <PaletteArrow type='button' aria-label='More colours'>
      <Caret color='#444' size={7} />
    </PaletteArrow>
    <PaletteArrow type='button' aria-label='Expand palette'>
      <Icon w={8} h={9}>
        <path d='M1 0v9' stroke='#000' strokeWidth='1.5' />
        <path d='M7.5 0v9L2.5 4.5z' fill='#000' stroke='none' />
      </Icon>
    </PaletteArrow>
  </Palette>
)

const Status = () => (
  <StatusBar>
    <Selection>2 Objects Sel...</Selection>
    {icons.bucket}
    <Paint $color='#fff'>
      <Icon>
        <path d='M0 0l16 16M16 0L0 16' stroke='#000' strokeWidth='1' />
      </Icon>
    </Paint>
    <span>None</span>
    <span>( 8.177 , 8.341 )</span>
    <Hint>Click an object twice for rotating/skewing; dbl-clicking tool selects all obje...</Hint>
    {icons.pen}
    <Paint $color='#000' />
    <Corner>
      <span>Black&nbsp; 0.500 points</span>
      <Icon w={9} h={9}>
        <path d='M6 1h2M3 4h2M6 4h2M0 7h2M3 7h2M6 7h2' stroke='#aaa' strokeWidth='2' />
      </Icon>
    </Corner>
  </StatusBar>
)

const App = () => (
  <>
    <GlobalStyle />
    <Window>
      <TitleBar>
        <CorelMark width={16} height={16} />
        <Title>CorelDRAW X4 - [Graphic1]</Title>
        <WindowButtons>
          <WindowButton type='button' aria-label='Minimize'>
            <Icon w={12} h={10}>
              <path d='M1 6h10v3H1z' fill='#fff' stroke='#555' strokeWidth='1' />
            </Icon>
          </WindowButton>
          <WindowButton type='button' aria-label='Maximize'>
            <Icon w={12} h={10}>
              <path d='M1 1h10v8H1zM4.5 4h3v2h-3z' fill='#fff' fillRule='evenodd' stroke='#444' strokeWidth='1' />
            </Icon>
          </WindowButton>
          <WindowButton type='button' $close aria-label='Close'>
            <Icon w={12} h={10}>
              <path d='M2 1l8 8M10 1L2 9' stroke='#4a2c2c' strokeWidth='4' />
              <path d='M2 1l8 8M10 1L2 9' stroke='#fff' strokeWidth='2.5' />
            </Icon>
          </WindowButton>
        </WindowButtons>
      </TitleBar>
      <MenuBar>
        <CorelMark width={12} height={15} />
        <MenuLinks>
          {menus.map(([label, key, width]) => (
            <MenuButton key={label} type='button' $width={width}>
              {label.slice(0, key)}
              <u>{label[key]}</u>
              {label.slice(key + 1)}
            </MenuButton>
          ))}
        </MenuLinks>
        <DocButtons>
          <PlainButton type='button' aria-label='Minimize document'>
            <Icon w={8} h={8}>
              <path d='M0 7h8' stroke='#c4c4c4' strokeWidth='2' />
            </Icon>
          </PlainButton>
          <PlainButton type='button' aria-label='Restore document'>
            <Icon w={8} h={8}>
              <path d='M1 3h4v4H1z' stroke='#c4c4c4' strokeWidth='2' />
              <path d='M2 .5h5.5V6' stroke='#c4c4c4' strokeWidth='1' />
            </Icon>
          </PlainButton>
          <PlainButton type='button' aria-label='Close document'>
            <Icon w={8} h={8}>
              <path d='M1 1l6 6M7 1L1 7' stroke='#c4c4c4' strokeWidth='2' />
            </Icon>
          </PlainButton>
        </DocButtons>
      </MenuBar>
      <StandardBar />
      <PropertyPanel />
      <Workspace>
        <ToolPanel />
        <Desk>
          <RulerTop>
            <Ruler />
          </RulerTop>
          <RulerLeft>
            <Ruler vertical />
          </RulerLeft>
          <Canvas>
            <Page>
              <Drawing />
            </Page>
          </Canvas>
          <ScrollColumn>
            <Caret dir='up' size={6} />
            <Space $grow={66} />
            <Thumb $vertical>
              <Icon w={8} h={9}>
                <path d='M0 1.5h8M0 4.5h8M0 7.5h8' stroke='#666' strokeWidth='1' />
              </Icon>
            </Thumb>
            <Space $grow={142} />
            <Caret size={6} />
          </ScrollColumn>
          <Pages />
          <PlainButton type='button' aria-label='Navigator'>
            {icons.zoomPage}
          </PlainButton>
        </Desk>
        <Colors />
      </Workspace>
      <Status />
      <Spot />
      <Callout
        label='1'
        width={68}
        height={50}
        $left={33}
        $top={121}
        points='3,24 34,3 34,13 64,13 64,35 34,35 34,45'
        textX={26}
        textY={29}
      />
      <Callout
        label='2'
        width={60}
        height={50}
        $left={393}
        $top={211}
        points='5,24 30,5 30,15 54,15 54,34 30,34 30,44'
        textX={24}
        textY={28}
      />
      <Callout
        label='3'
        width={60}
        height={50}
        $left={373}
        $top={276}
        points='5,23 31,5 31,13 57,13 57,32 31,32 31,42'
        textX={24}
        textY={27}
      />
      <Callout
        label='4'
        width={44}
        height={46}
        $right={1}
        $top={113}
        points='22,3 41,22 32,22 32,43 12,43 12,22 3,22'
        textX={22}
        textY={27}
      />
    </Window>
  </>
)

export default App
